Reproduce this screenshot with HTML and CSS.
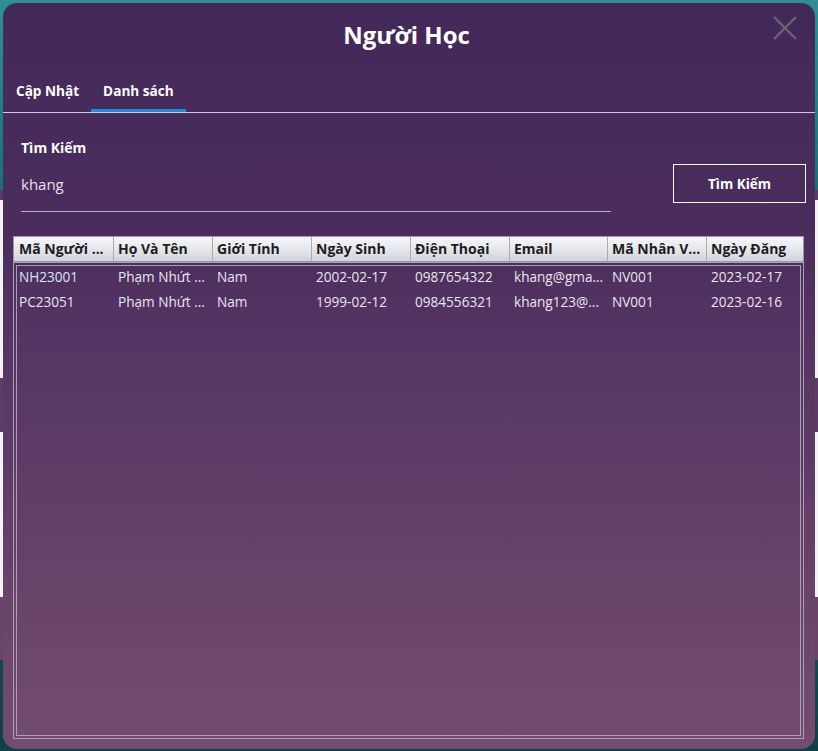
FILE: index.html
```html
<!DOCTYPE html>
<html lang="vi">
<head>
<meta charset="utf-8">
<title>Người Học</title>
<link rel="stylesheet" href="styles.css">
</head>
<body>
<div class="dialog">
  <div class="titlebar">
    <h1 class="title">Người Học</h1>
    <span class="close" aria-label="Đóng">
      <svg width="26" height="24" viewBox="0 0 26 24"><path d="M2 1 L24 23 M24 1 L2 23" stroke="#6c6673" stroke-width="2.2" fill="none"/></svg>
    </span>
  </div>
  <div class="tabs">
    <div class="tab">Cập Nhật</div>
    <div class="tab active">Danh sách</div>
  </div>
  <div class="search">
    <div class="search-field">
      <div class="label">Tìm Kiếm</div>
      <div class="input">khang</div>
    </div>
    <div class="btn">Tìm Kiếm</div>
  </div>
  <div class="table">
    <div class="thead">
      <div class="th">Mã Người ...</div>
      <div class="th">Họ Và Tên</div>
      <div class="th">Giới Tính</div>
      <div class="th">Ngày Sinh</div>
      <div class="th">Điện Thoại</div>
      <div class="th">Email</div>
      <div class="th">Mã Nhân V...</div>
      <div class="th">Ngày Đăng</div>
    </div>
    <div class="tbody-outer">
      <div class="tbody">
        <div class="tr">
          <div class="td first">NH23001</div>
          <div class="td">Phạm Nhứt ...</div>
          <div class="td">Nam</div>
          <div class="td">2002-02-17</div>
          <div class="td">0987654322</div>
          <div class="td">khang@gma...</div>
          <div class="td">NV001</div>
          <div class="td">2023-02-17</div>
        </div>
        <div class="tr">
          <div class="td">PC23051</div>
          <div class="td">Phạm Nhứt ...</div>
          <div class="td">Nam</div>
          <div class="td">1999-02-12</div>
          <div class="td">0984556321</div>
          <div class="td">khang123@...</div>
          <div class="td">NV001</div>
          <div class="td">2023-02-16</div>
        </div>
      </div>
    </div>
  </div>
</div>
</body>
</html>
```
FILE: styles.css
```css
* { box-sizing: border-box; }
html, body { margin: 0; padding: 0; }
body {
  width: 818px;
  height: 751px;
  overflow: hidden;
  font-family: "Open Sans", "Noto Sans", sans-serif;
  padding: 3px 3px 2px 3px;
  background:
    linear-gradient(to bottom,
      #2f8f98 0px, #1f6e76 190px,
      #5a3a66 190px, #5a3a66 200px,
      #f4f2f6 200px, #f4f2f6 378px,
      #5e3c67 378px, #5e3c67 432px,
      #f4f2f6 432px, #f4f2f6 597px,
      #6a4569 597px, #6a4569 660px,
      #134a50 660px, #0f4045 751px);
}
.dialog {
  width: 812px;
  height: 746px;
  border-radius: 14px;
  background: linear-gradient(to bottom, #43295a 0%, #4a2d5d 30%, #5b3965 55%, #744c6f 100%);
  padding: 0 11px 10px 10px;
  display: flex;
  flex-direction: column;
  color: #fff;
}
.titlebar {
  position: relative;
  height: 68px;
  display: flex;
  justify-content: center;
  align-items: flex-start;
}
.title {
  margin: 14px 0 0 0;
  font-size: 24px;
  font-weight: 700;
  line-height: 36px;
  color: #fff;
  padding-right: 4px;
}
.close {
  position: absolute;
  right: 6px;
  top: 13px;
  width: 26px;
  height: 24px;
}
.close svg { display: block; }
.tabs {
  display: flex;
  margin: 0 -11px 0 -10px;
  padding-left: 1px;
  border-bottom: 1px solid #cfc9d4;
  height: 42px;
}
.tab {
  font-size: 13.6px;
  font-weight: 700;
  padding: 0 12px;
  line-height: 19px;
  padding-top: 10px;
  height: 41px;
  color: #fff;
}
.tab.active {
  border-bottom: 3px solid #1e8fd6;
}
.search {
  display: flex;
  align-items: flex-start;
  justify-content: space-between;
  padding-top: 25px;
  height: 123px;
}
.search-field {
  width: 590px;
  margin-left: 8px;
}
.label {
  font-size: 14px;
  font-weight: 700;
  line-height: 20px;
  color: #fff;
}
.input {
  margin-top: 15px;
  font-size: 15px;
  line-height: 22px;
  color: #e6e1ea;
  height: 39px;
  border-bottom: 1px solid #b7adc2;
}
.btn {
  margin-top: 26px;
  margin-right: -2px;
  width: 133px;
  height: 39px;
  border: 1px solid #ffffff;
  display: flex;
  align-items: center;
  justify-content: center;
  font-size: 13.5px;
  font-weight: 700;
}
.table {
  flex: 1;
  display: flex;
  flex-direction: column;
  width: 791px;
}
.thead {
  display: grid;
  grid-template-columns: 99px 99px 99px 99px 99px 98px 99px 99px;
  height: 26px;
  background: linear-gradient(to bottom, #f6f6f8 0%, #e6e7eb 50%, #d3d4da 100%);
  border: 1px solid #9a9aa6;
}
.th {
  font-size: 14px;
  font-weight: 700;
  color: #1c1c22;
  line-height: 23px;
  padding-left: 4px;
  border-left: 1px solid #a9aab3;
  white-space: nowrap;
  overflow: hidden;
}
.th:first-child { border-left: none; padding-left: 5px; }
.tbody-outer {
  flex: 1;
  border: 1px solid #a7a1b3;
  padding: 2px;
}
.tbody {
  height: 100%;
  border: 1px solid #a7a1b3;
}
.tr {
  display: grid;
  grid-template-columns: 96px 99px 99px 99px 99px 98px 99px 99px;
  height: 25px;
}
.td {
  font-size: 13.6px;
  color: #e9e6ee;
  line-height: 21px;
  padding-left: 2px;
  white-space: nowrap;
  overflow: hidden;
}
.td:not(:first-child) { padding-left: 5px; }
.td.first { color: #d8e4f8; }
```
